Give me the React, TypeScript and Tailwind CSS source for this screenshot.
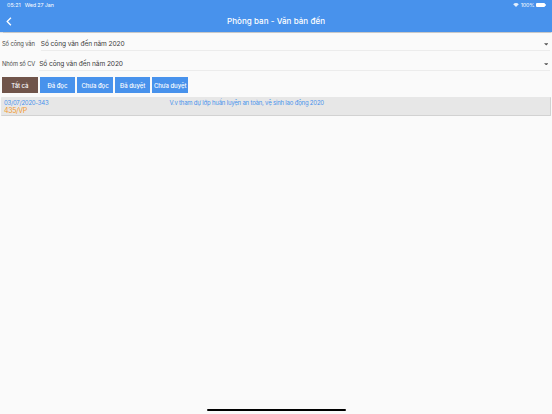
import React, { useState } from "react";

const filters = ["Tất cả", "Đã đọc", "Chưa đọc", "Đã duyệt", "Chưa duyệt"];

const documents = [
  { id: "03/07/2020-343", code: "435/VP", title: "V.v tham dự lớp huấn luyện an toàn, vệ sinh lao động 2020" },
];

function StatusBar() {
  return (
    <div className="flex h-[10px] items-center justify-between pl-[7px] pr-[6px] text-[5.4px] leading-[10px]">
      <div className="flex gap-[4px]">
        <span>05:21</span>
        <span className="-tracking-[0.1px]">Wed 27 Jan</span>
      </div>
      <div className="flex items-center gap-[1.5px]">
        <svg className="h-[4px] w-[6px]" viewBox="0 0 12 8" fill="white">
          <path d="M6 8 0.4 2.4C3.5-0.6 8.5-0.6 11.6 2.4Z" fillOpacity="0.85" />
        </svg>
        <span className="-tracking-[0.1px]">100%</span>
        <div className="flex items-center">
          <div className="h-[4px] w-[9px] rounded-[1px] bg-white" />
          <div className="ml-[0.4px] h-[1.5px] w-[0.6px] bg-white/70" />
        </div>
      </div>
    </div>
  );
}

interface SelectRowProps {
  label: string;
  value: string;
  gap: string;
}

function SelectRow({ label, value, gap }: SelectRowProps) {
  return (
    <div className={`flex h-full items-stretch pl-[2px] pr-[2px] ${gap}`}>
      <span className="flex shrink-0 items-center pt-[1px] text-[5.8px] -tracking-[0.12px] text-[#4a4a4a]">{label}</span>
      <div className="flex flex-1 items-center justify-between border-b border-[#ececec] pr-[2px]">
        <span className="pt-[3px] text-[6.6px] -tracking-[0.09px] text-[#3c3c3c]">{value}</span>
        <svg className="mt-[2px] h-[2.5px] w-[4.5px]" viewBox="0 0 10 5" fill="#555">
          <path d="M0 0h10L5 5z" />
        </svg>
      </div>
    </div>
  );
}

export default function App() {
  const [active, setActive] = useState("Tất cả");

  return (
    <div className="flex h-[414px] w-[552px] flex-col overflow-hidden bg-[#fafafa] font-['Inter','Roboto',sans-serif]">
      <header className="h-[32px] shrink-0 bg-[#4892ec] text-white shadow-[0_0.5px_1px_rgba(0,0,0,0.2)]">
        <StatusBar />
        <div className="grid h-[22px] grid-cols-[40px_1fr_40px] items-center">
          <button className="pl-[6px]">
            <svg className="h-[9px] w-[6px]" viewBox="0 0 6 9" fill="none" stroke="white" strokeWidth="1.3">
              <path d="M4.9 0.8 1.2 4.5 4.9 8.2" />
            </svg>
          </button>
          <h1 className="text-center text-[8px] font-medium leading-[22px] tracking-[0.06px]">Phòng ban - Văn bản đến</h1>
        </div>
      </header>

      <main className="flex flex-1 flex-col">
        <div className="mt-[5px] h-[14px]">
          <SelectRow label="Sổ công văn" value="Sổ công văn đến năm 2020" gap="gap-[6px]" />
        </div>
        <div className="mt-[5px] h-[15px]">
          <SelectRow label="Nhóm sổ CV" value="Sổ công văn đến năm 2020" gap="gap-[4px]" />
        </div>

        <div className="mt-[6px] flex gap-[2px] pl-[2px]">
          {filters.map((name) => (
            <button
              key={name}
              onClick={() => setActive(name)}
              className={`h-[16px] w-[35.6px] whitespace-nowrap text-center text-[6px] font-medium -tracking-[0.05px] text-white ${
                active === name ? "bg-[#70544a]" : "bg-[#4892ec]"
              }`}
            >
              {name}
            </button>
          ))}
        </div>

        {/* Document list */}
        <div className="mt-[4px] px-[1px]">
          {documents.map((doc) => (
            <div
              key={doc.id}
              className="grid h-[19px] grid-cols-[165.5px_1fr] rounded-[1px] border-b border-r border-[#d2d2d2] bg-[#e7e7e7] pl-[3px] pt-[2px]"
            >
              <div className="flex flex-col">
                <span className="text-[6px] leading-[8px] -tracking-[0.24px] text-[#4892ec]">{doc.id}</span>
                <span className="text-[7px] leading-[8px] -tracking-[0.35px] text-[#f39a2d]">{doc.code}</span>
              </div>
              <span className="whitespace-nowrap text-[6px] leading-[8px] -tracking-[0.2px] text-[#4892ec]">{doc.title}</span>
            </div>
          ))}
        </div>
      </main>

      {/* Home indicator */}
      <div className="mx-auto mb-[3px] h-[2.5px] w-[139px] shrink-0 rounded-full bg-black" />
    </div>
  );
}
